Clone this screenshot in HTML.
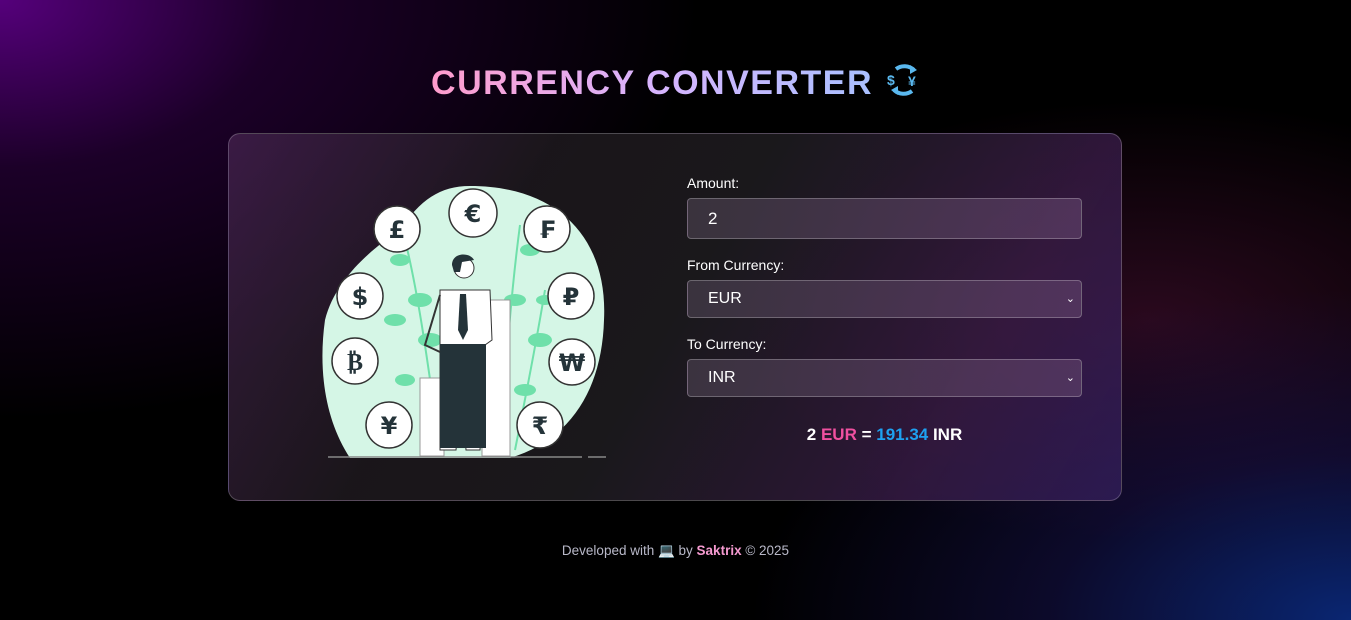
<!DOCTYPE html>
<html><head><meta charset="utf-8"><style>
*{margin:0;padding:0;box-sizing:border-box}
html,body{width:1351px;height:620px;overflow:hidden}
body{font-family:"Liberation Sans",sans-serif;color:#fff;position:relative;
background:
radial-gradient(ellipse 700px 420px at 0 0,rgba(90,0,130,0.95),rgba(55,0,80,0.5) 40%,rgba(0,0,0,0) 100%),
radial-gradient(ellipse 600px 330px at 1351px 620px,rgba(10,40,120,0.95),rgba(25,20,85,0.5) 50%,rgba(0,0,0,0) 100%),
radial-gradient(ellipse 450px 220px at 1150px 320px,rgba(70,15,50,0.6),rgba(0,0,0,0) 100%),
#000;}
h1{position:absolute;top:60px;left:0;width:1351px;text-align:center;font-size:34px;font-weight:bold;letter-spacing:1.5px;padding-left:4px}
h1 .t{background:linear-gradient(90deg,#ff9ccc,#d8b4fe,#a9c0ff);-webkit-background-clip:text;background-clip:text;color:transparent}
.card{position:absolute;left:228px;top:133px;width:894px;height:368px;border-radius:12px;border:1px solid rgba(255,255,255,0.22);
background:linear-gradient(120deg,rgba(70,35,80,0.75) 0%,rgba(30,25,30,0.85) 30%,rgba(30,28,32,0.85) 50%,rgba(60,30,75,0.75) 80%,rgba(50,30,90,0.8) 100%)}
label{position:absolute;left:687px;font-size:14px;color:#fff}
.f{position:absolute;left:687px;width:395px;border-radius:4px;border:1px solid rgba(255,255,255,0.25);
background:linear-gradient(90deg,rgba(80,70,85,0.6),rgba(100,70,110,0.6));font-size:17px;padding-left:20px}
.res{position:absolute;top:425px;left:687px;width:395px;text-align:center;font-size:17px;font-weight:bold}
.foot{position:absolute;top:543px;width:1351px;text-align:center;font-size:13.5px;color:#b8b8c8}
</style></head><body>
<h1><span class="t">CURRENCY CONVERTER</span> <svg width="40" height="40" viewBox="0 0 40 40" style="vertical-align:-6px"><g fill="none" stroke="#5ab8ee" stroke-width="4"><path d="M12 9 A14 14 0 0 1 30 10"/><path d="M28 31 A14 14 0 0 1 10 30"/></g><path d="M26 5 L33 10 L26 14Z M14 26 L7 30 L14 35Z" fill="#5ab8ee"/><text x="3" y="25" font-size="14" font-weight="bold" fill="#5ab8ee" font-family="Liberation Sans">$</text><text x="24" y="26" font-size="14" font-weight="bold" fill="#5ab8ee" font-family="Liberation Sans">¥</text></svg></h1>
<div class="card"></div>
<svg style="position:absolute;left:0;top:0" width="1351" height="620">
<path d="M470 186 C560 186 608 240 604 320 C602 390 570 440 510 458 L350 458 C325 420 318 370 325 320 C335 280 370 250 400 230 C420 200 440 186 470 186Z" fill="#d5f6e6"/>
<g stroke="#6fe0aa" stroke-width="2" fill="none"><path d="M405 240 C420 300 430 380 440 450"/><path d="M520 225 C510 300 505 380 500 450"/><path d="M545 290 C535 350 525 400 515 450"/></g>
<g fill="#6fe0aa">
<ellipse cx="400" cy="260" rx="10" ry="6"/><ellipse cx="420" cy="300" rx="12" ry="7"/><ellipse cx="395" cy="320" rx="11" ry="6"/><ellipse cx="430" cy="340" rx="12" ry="7"/><ellipse cx="405" cy="380" rx="10" ry="6"/><ellipse cx="530" cy="250" rx="10" ry="6"/><ellipse cx="515" cy="300" rx="11" ry="6"/><ellipse cx="540" cy="340" rx="12" ry="7"/><ellipse cx="525" cy="390" rx="11" ry="6"/><ellipse cx="545" cy="300" rx="9" ry="5"/></g>
<g fill="#fff" stroke="#999" stroke-width="1"><rect x="420" y="378" width="24" height="78"/><rect x="482" y="300" width="28" height="156"/></g>
<line x1="328" y1="457" x2="582" y2="457" stroke="#888" stroke-width="1.5"/><line x1="588" y1="457" x2="606" y2="457" stroke="#888" stroke-width="1.5"/>
<path d="M440 290 L490 290 L492 340 L485 345 L480 450 L466 450 L462 380 L456 450 L440 450 L440 345 Z" fill="#fff" stroke="#333"/>
<rect x="440" y="344" width="46" height="104" fill="#243339"/>
<path d="M460 294 L466 294 L468 330 L463 340 L458 330Z" fill="#243339"/>
<path d="M440 295 L425 345 L440 352" fill="none" stroke="#333" stroke-width="2"/>
<circle cx="464" cy="268" r="10" fill="#fff" stroke="#333"/><path d="M452 265 C452 252 470 252 474 260 L462 262 L460 272 L454 272Z" fill="#243339"/>
<g font-family="DejaVu Sans" font-weight="bold" font-size="24" fill="#243339" text-anchor="middle">
<g stroke="#333" stroke-width="1.5" fill="#fff">
<circle cx="397" cy="229" r="23"/><circle cx="473" cy="213" r="24"/><circle cx="547" cy="229" r="23"/><circle cx="360" cy="296" r="23"/><circle cx="571" cy="296" r="23"/><circle cx="355" cy="361" r="23"/><circle cx="572" cy="362" r="23"/><circle cx="389" cy="425" r="23"/><circle cx="540" cy="425" r="23"/></g>
<text x="397" y="238">£</text><text x="473" y="222">€</text><text x="547" y="238">₣</text><text x="360" y="305">$</text><text x="571" y="305">₽</text><text x="355" y="370">₿</text><text x="572" y="371">₩</text><text x="389" y="434">¥</text><text x="540" y="434">₹</text></g>
</svg>
<label style="top:175px">Amount:</label>
<div class="f" style="top:198px;height:41px;line-height:39px">2</div>
<label style="top:257px">From Currency:</label>
<div class="f" style="top:280px;height:38px;line-height:36px;font-size:16px">EUR<span style="position:absolute;right:6px;font-size:11px">&#8964;</span></div>
<label style="top:336px">To Currency:</label>
<div class="f" style="top:359px;height:38px;line-height:36px;font-size:16px">INR<span style="position:absolute;right:6px;font-size:11px">&#8964;</span></div>
<div class="res">2 <span style="color:#f050a0">EUR</span> = <span style="color:#1ea0f0">191.34</span> INR</div>
<div class="foot">Developed with 💻 by <b style="color:#f59ad0">Saktrix</b> © 2025</div>
</body></html>
